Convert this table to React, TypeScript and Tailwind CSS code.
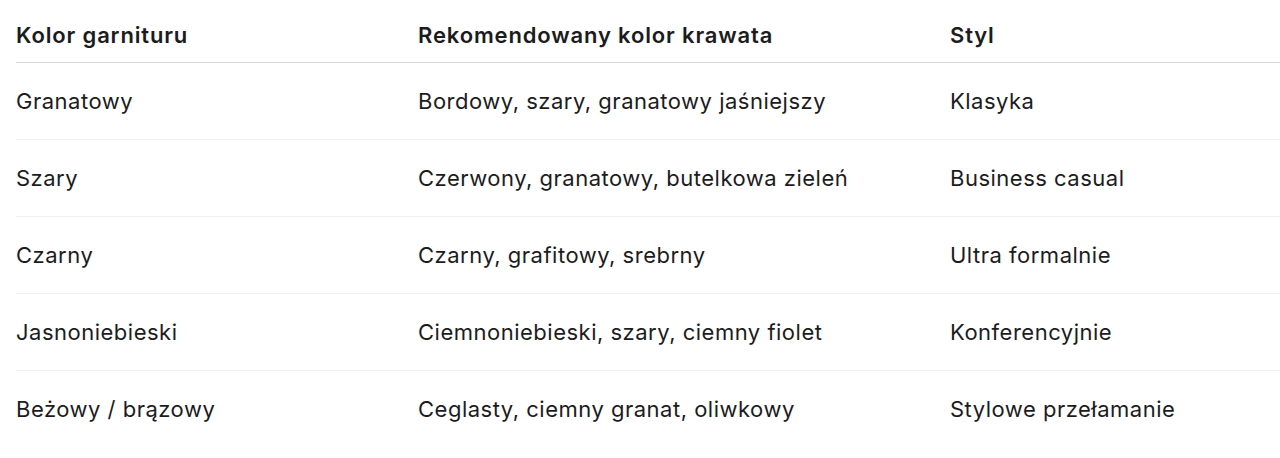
import React from "react";

const rows = [
  ["Granatowy", "Bordowy, szary, granatowy jaśniejszy", "Klasyka"],
  ["Szary", "Czerwony, granatowy, butelkowa zieleń", "Business casual"],
  ["Czarny", "Czarny, grafitowy, srebrny", "Ultra formalnie"],
  ["Jasnoniebieski", "Ciemnoniebieski, szary, ciemny fiolet", "Konferencyjnie"],
  ["Beżowy / brązowy", "Ceglasty, ciemny granat, oliwkowy", "Stylowe przełamanie"],
];

function App() {
  return (
    <div className="h-[458px] w-[1280px] bg-white pl-4 text-[#1c1c1e] font-['Inter','Noto_Sans',sans-serif] text-[22px] tracking-[0.5px]">
      <table className="w-full border-collapse table-fixed">
        <colgroup>
          <col className="w-[402px]" />
          <col className="w-[532px]" />
          <col />
        </colgroup>
        <thead>
          <tr className="border-b border-[#d8d8d8]">
            <th className="h-[62px] pt-[9px] text-left font-semibold tracking-[0.85px] align-middle">Kolor garnituru</th>
            <th className="h-[62px] pt-[9px] text-left font-semibold tracking-[0.85px] align-middle">Rekomendowany kolor krawata</th>
            <th className="h-[62px] pt-[9px] text-left font-semibold tracking-[0.85px] align-middle">Styl</th>
          </tr>
        </thead>
        <tbody>
          {rows.map((r, i) => (
            <tr key={i} className={i < rows.length - 1 ? "border-b border-[#f0f0f0]" : ""}>
              {r.map((c, j) => (
                <td key={j} className="h-[77px] pt-[2px] align-middle">
                  {c}
                </td>
              ))}
            </tr>
          ))}
        </tbody>
      </table>
    </div>
  );
}

export default App;
